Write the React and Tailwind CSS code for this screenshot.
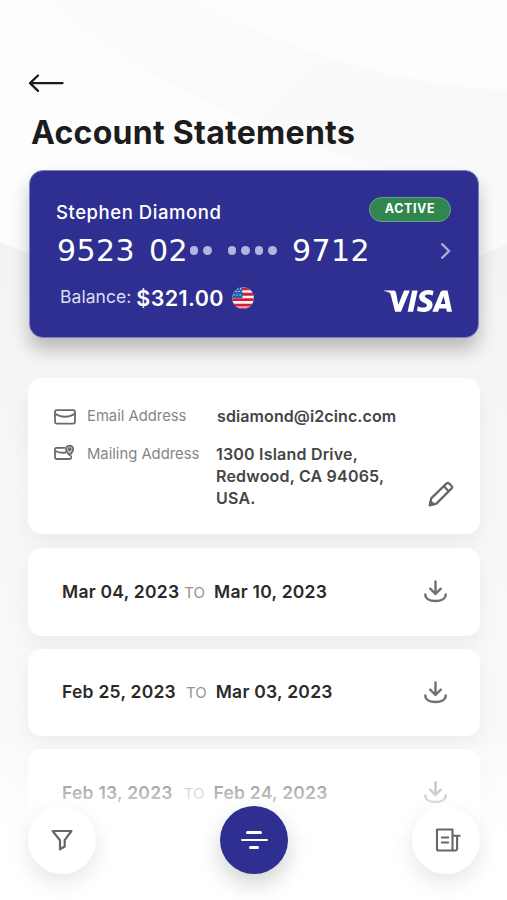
import { SiVisa } from 'react-icons/si';

const statements = [
  { from: 'Mar 04, 2023', to: 'Mar 10, 2023', gap: 'pl-[5px] pr-[9px]' },
  { from: 'Feb 25, 2023', to: 'Mar 03, 2023', gap: 'pl-[10px] pr-[9px]' },
  { from: 'Feb 13, 2023', to: 'Feb 24, 2023', gap: 'pl-[11px] pr-[9px]' },
];

const BackArrow = () => (
  <svg width="36" height="20" viewBox="0 0 36 20" fill="none" stroke="#1b1b1b" strokeWidth="2.3" strokeLinecap="round" strokeLinejoin="round">
    <path d="M34.500 10.200H2.500M10 2.500 2 10.200l8 7.700" />
  </svg>
);

const UsFlag = () => (
  <svg width="22" height="22" viewBox="0 0 22 22">
    <clipPath id="flag">
      <circle cx="11" cy="11" r="10.8" />
    </clipPath>
    <g clipPath="url(#flag)">
      <rect width="22" height="22" fill="#f7f4f8" />
      <path d="M0 1.8h22M0 7.2h22M0 12.6h22M0 18.1h22" stroke="#cf1f35" strokeWidth="2.9" />
      <rect y="20.6" width="22" height="2" fill="#cf1f35" />
      <rect width="10.4" height="11" fill="#1d62b5" />
      <path d="M3.5 4.5h7M1.5 8h9M5 1.8h6" stroke="#dce8f8" strokeWidth="1.2" strokeDasharray="1.3 1.7" />
    </g>
  </svg>
);

const MailIcon = () => (
  <svg width="22" height="16" viewBox="0 0 22 16" fill="none" stroke="#6b6b6b" strokeWidth="1.8" strokeLinejoin="round">
    <rect x="1" y="1.2" width="20" height="13.4" rx="1.8" />
    <path d="M1 4.5c5.500 4.300 14.500 4.300 20 0" />
  </svg>
);

const MailPinIcon = () => (
  <svg width="22" height="17" viewBox="0 0 22 17" fill="none" stroke="#6b6b6b" strokeWidth="1.8" strokeLinecap="round" strokeLinejoin="round">
    <path d="M10.500 3.800H2.500A1.500 1.500 0 0 0 1 5.300v8.200A1.500 1.500 0 0 0 2.500 15h13.200a1.500 1.500 0 0 0 1.500-1.500v-1.300" />
    <path d="M1 6.800c3 1.700 7 2.300 10.500 1.700" />
    <path d="M15.600 11c-2.300-2.100-3.600-3.800-3.600-5.700a3.600 3.600 0 0 1 7.200 0c0 1.900-1.300 3.600-3.600 5.700Z" fill="#c9c9c9" />
    <circle cx="15.600" cy="5.200" r="1" />
  </svg>
);

const PencilIcon = () => (
  <svg width="26" height="26" viewBox="0 0 26 26" fill="none" stroke="#666" strokeWidth="2.2" strokeLinejoin="round">
    <path d="m1.800 24.200 1.400-6.800L18.600 2.400a1.700 1.700 0 0 1 2.400 0l2.600 2.600a1.700 1.700 0 0 1 0 2.400L8.400 22.600Z" />
    <path d="m15.800 5.200 5 5" />
    <path d="m1.800 24.200.8-3.800 3 3Z" fill="#666" />
  </svg>
);

const DownloadIcon = () => (
  <svg width="24" height="23" viewBox="0 0 24 23" fill="none" stroke="#707070" strokeWidth="2.400" strokeLinecap="round" strokeLinejoin="round">
    <path d="M12.500 1.500v12.500M7.200 8.700l5.300 5.300 5.300-5.300" />
    <path d="M2.300 14.500c0 4 4 6.500 10.200 6.500s10.200-2.500 10.200-6.500" />
  </svg>
);

const FilterIcon = () => (
  <svg width="22" height="22" viewBox="0 0 22 22" fill="none" stroke="#666" strokeWidth="2.2" strokeLinejoin="round">
    <path d="M1.600 2h18.800l-6.700 9.200v6.300L9 20.300v-9.100Z" />
  </svg>
);

const StatementIcon = () => (
  <svg width="26" height="24" viewBox="0 0 26 24" fill="none" stroke="#666" strokeWidth="2.1" strokeLinejoin="round">
    <path d="M17.500 22.500H3.200A1.200 1.200 0 0 1 2 21.300V1.500h15.500Z" />
    <path d="M17.500 7.800h8M17.500 22.500h2.800a1.800 1.800 0 0 0 1.800-1.800V7.800" />
    <path d="M6.800 9.500h6.400M6.800 14.500h6.400" strokeLinecap="round" />
  </svg>
);

// faint curved bands behind the page content
const Backdrop = () => (
  <svg className="absolute inset-0" width="507" height="900" viewBox="0 0 507 900">
    <defs>
      <linearGradient id="upper" x1="0" y1="0" x2="1" y2="0.4">
        <stop offset="0" stopColor="#fcfcfc" />
        <stop offset="1" stopColor="#f9f9f9" />
      </linearGradient>
      <linearGradient id="lower" x1="0" y1="0" x2="0" y2="1">
        <stop offset="0" stopColor="#f3f3f3" />
        <stop offset="0.35" stopColor="#f7f7f7" />
        <stop offset="1" stopColor="#fbfbfb" />
      </linearGradient>
    </defs>
    <rect width="507" height="900" fill="#fdfdfd" />
    <path d="M190 0C270 40 380 84 507 90V195C400 180 180 120 50 0Z" fill="url(#upper)" />
    <path d="M400 193h107v60H400Z" fill="#fafafa" />
    <path d="M0 242c90 36 180 46 270 44 90 0 170-10 237-42v656H0Z" fill="url(#lower)" />
  </svg>
);

const Dots = ({ count, className }) => (
  <div className={`flex items-center gap-[5px] ${className}`}>
    {Array.from({ length: count }).map((_, i) => (
      <span key={i} className="size-[8.500px] rounded-full bg-[#b3b5e0]" />
    ))}
  </div>
);

const StatementRow = ({ from, to, gap }) => (
  <div className="flex h-[87.500px] items-center justify-between rounded-[14px] bg-white pl-[34px] pr-[33px] shadow-[0_10px_22px_rgba(0,0,0,0.055)]">
    <div className="flex items-baseline text-[17.500px] font-semibold tracking-[0.25px] text-[#2a2a2a]">
      <span>{from}</span>
      <span className={`${gap} text-[15px] font-normal tracking-normal text-[#949494]`}>TO</span>
      <span>{to}</span>
    </div>
    <DownloadIcon />
  </div>
);

const App = () => {
  return (
    <div className="relative h-[900px] w-[507px] overflow-hidden bg-[#fcfcfc] font-['Inter','Liberation_Sans',sans-serif]">
      <Backdrop />

      <div className="relative pl-7 pr-[27px] pt-[73px]">
        <button className="block">
          <BackArrow />
        </button>
        <h1 className="mt-[20px] pl-[3px] text-[32px] font-[650] leading-10 tracking-[0.28px] whitespace-nowrap text-[#1c1c1c]">
          Account Statements
        </h1>

        <section className="mx-px mt-[17px] flex h-[168px] flex-col rounded-[14px] border border-[#7f80c0] bg-[#2e2f91] px-[26px] text-white shadow-[0_12px_18px_rgba(0,0,0,0.24)]">
          <div className="flex h-[56px] items-end justify-between">
            <span className="text-[18.500px] font-[550] leading-[30px] tracking-[0.55px]">Stephen Diamond</span>
            <span className="mb-[5px] mr-px flex h-[25px] w-[82px] items-center justify-center rounded-full border border-[#63a589] bg-[#318650] text-[12.500px] font-bold tracking-[0.6px]">
              ACTIVE
            </span>
          </div>
          <div className="flex h-[47px] items-center justify-between">
            <div className="flex items-center pl-px font-['DejaVu_Sans','Liberation_Sans',sans-serif] text-[30px] leading-8 tracking-[0.4px]">
              <span>9523</span>
              <span className="pl-[14px]">02</span>
              <Dots count={2} className="pl-[2px]" />
              <Dots count={4} className="pl-[16px]" />
              <span className="pl-[15px]">9712</span>
            </div>
            <svg className="mr-px" width="11" height="18" viewBox="0 0 11 18" fill="none" stroke="#a9abdb" strokeWidth="2.400">
              <path d="m1.500 1.500 7.500 7.500-7.500 7.500" />
            </svg>
          </div>
          <div className="flex h-[47px] items-center justify-between">
            <div className="flex items-center pl-1">
              <span className="text-[17.500px] tracking-[0.05px] text-[#dddef4]">Balance:</span>
              <span className="pl-[5px] pt-px text-[21.500px] font-semibold tracking-[0.4px]">$321.00</span>
              <span className="pl-[8px]">
                <UsFlag />
              </span>
            </div>
            <SiVisa size={68} className="mt-[6px]" />
          </div>
        </section>

        <section className="mt-[40px] flex h-[156px] rounded-[14px] bg-white pl-[26px] pr-[26px] pt-[27px] shadow-[0_10px_22px_rgba(0,0,0,0.055)]">
          <div className="flex-1 text-[14.800px] leading-[22px] text-[#858585]">
            <div className="flex h-[38px]">
              <div className="w-[33px] pt-1">
                <MailIcon />
              </div>
              <span className="w-[130px]">Email Address</span>
              <span className="text-[16px] font-semibold tracking-[0.1px] text-[#454545]">sdiamond@i2cinc.com</span>
            </div>
            <div className="flex">
              <div className="w-[33px] pt-px">
                <MailPinIcon />
              </div>
              <span className="w-[129px]">Mailing Address</span>
              <p className="text-[16px] font-semibold tracking-[0.2px] text-[#454545]">
                1300 Island Drive,
                <br />
                Redwood, CA 94065,
                <br />
                USA.
              </p>
            </div>
          </div>
          <button className="mb-[27px] self-end">
            <PencilIcon />
          </button>
        </section>

        <div className="mt-[14px] space-y-[13px]">
          {statements.map((item) => (
            <StatementRow key={item.from} {...item} />
          ))}
        </div>
      </div>

      <div className="absolute inset-x-0 bottom-0 h-[170px] bg-gradient-to-b from-transparent via-white/80 via-45% to-white to-70%" />

      <nav className="absolute inset-x-0 bottom-[26px] flex items-center justify-between pl-7 pr-[27px]">
        <button className="flex size-[68px] items-center justify-center rounded-full bg-white shadow-[0_8px_22px_rgba(0,0,0,0.1)]">
          <FilterIcon />
        </button>
        <button className="flex size-[68px] flex-col items-center justify-center gap-[5px] rounded-full bg-[#2e2f91] shadow-[0_10px_22px_rgba(0,0,0,0.18)]">
          <span className="h-[2.500px] w-4 rounded-full bg-white" />
          <span className="h-[2.500px] w-[27px] rounded-full bg-white" />
          <span className="h-[2.500px] w-[10px] rounded-full bg-white" />
        </button>
        <button className="flex size-[68px] items-center justify-center rounded-full bg-white pl-[3px] shadow-[0_8px_22px_rgba(0,0,0,0.1)]">
          <StatementIcon />
        </button>
      </nav>
    </div>
  );
};

export default App;
